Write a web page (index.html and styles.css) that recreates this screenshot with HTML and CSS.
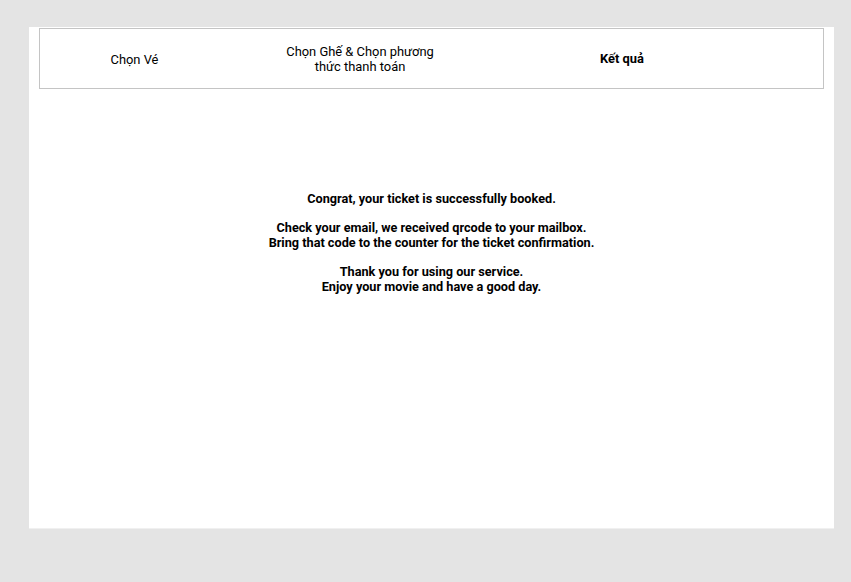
FILE: index.html
```html
<!DOCTYPE html>
<html lang="vi">
<head>
<meta charset="utf-8">
<title>Kết quả</title>
<link rel="stylesheet" href="styles.css">
</head>
<body>
<div class="panel">
  <div class="steps">
    <div class="step">Chọn Vé</div>
    <div class="step">Chọn Ghế &amp; Chọn phương<br>thức thanh toán</div>
    <div class="step active">Kết quả</div>
    <div class="step"></div>
  </div>
  <div class="message">
    <p>Congrat, your ticket is successfully booked.</p>
    <p>Check your email, we received qrcode to your mailbox.<br>Bring that code to the counter for the ticket confirmation.</p>
    <p>Thank you for using our service.<br>Enjoy your movie and have a good day.</p>
  </div>
</div>
</body>
</html>
```
FILE: styles.css
```css
html, body {
  margin: 0;
  padding: 0;
  background: #e4e4e4;
  font-family: Roboto, "Liberation Sans", sans-serif;
  color: #000;
}
body {
  padding: 27px 0 0 29px;
}
.panel {
  width: 805px;
  height: 502px;
  background: #fff;
  box-sizing: border-box;
  padding: 1px 10px 0 10px;
  border-bottom: 1px solid #f0f0f0;
}
.steps {
  height: 61px;
  box-sizing: border-box;
  border: 1px solid #c4c4c4;
  display: grid;
  grid-template-columns: 189px 262px 262px 1fr;
  align-items: center;
}
.step {
  text-align: center;
  font-size: 12.9px;
  line-height: 15px;
  padding-top: 1px;
}
.step.active {
  font-weight: 700;
  padding-top: 0;
}
.message {
  padding-top: 103px;
  text-align: center;
  font-weight: 700;
  font-size: 12.7px;
  line-height: 14.6px;
}
.message p {
  margin: 0 0 14.6px 0;
}
```
